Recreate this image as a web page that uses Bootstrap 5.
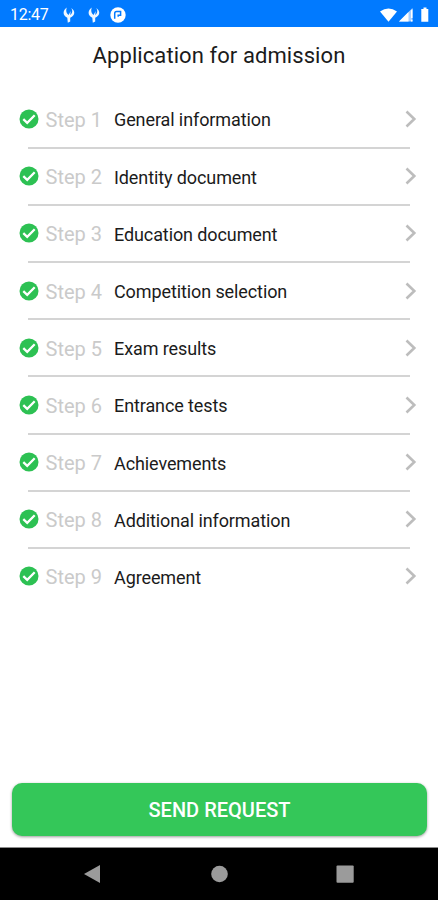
<!DOCTYPE html>
<html lang="en">
<head>
<meta charset="utf-8">
<meta name="viewport" content="width=device-width, initial-scale=1">
<title>Application for admission</title>
<link rel="stylesheet" href="https://cdn.jsdelivr.net/npm/bootstrap@5.3.0/dist/css/bootstrap.min.css">
<style>
body{font-family:Roboto,"Liberation Sans",sans-serif;height:900px;overflow:hidden;color:#1b1b1b}
svg{display:block;flex:none}
.status{height:27px;background:#017aff;padding:2px 8px 0 10px}
.clock{font-size:16px;line-height:24px;width:53px;letter-spacing:-.3px}
.status-app{margin-left:13px}
.status-round{margin-left:10px}
.page-title{font-size:22px;line-height:28px;margin:15px 0 0;font-weight:400;letter-spacing:.08px}
.steps{margin:20.400px 0 0}
.step{height:57.2px;padding:0 21px 0 18.500px;color:#1b1b1b}
.step-line{position:relative}
.step-line:not(:last-child)::after{content:"";position:absolute;left:28px;right:28px;bottom:-1px;height:2px;background:#d4d4d4}
.step-no{font-size:20px;width:68.500px;margin-left:7px;color:#cacaca;padding-top:2px}
.step-name{font-size:18px;padding-top:2px;letter-spacing:-.1px}
.send{height:53px;margin:0 11px 11px 12px;border-radius:10px;background:#34c759!important;color:#fff!important;font-size:20px;font-weight:500;border:0;box-shadow:0 1px 3px rgba(0,0,0,.4);padding-top:7px}
.sysbar{height:53px;background:#000;border-top:1px solid #8c8c8c}
</style>
<script src="https://cdn.jsdelivr.net/npm/bootstrap@5.3.0/dist/js/bootstrap.bundle.min.js"></script>
</head>
<body class="d-flex flex-column bg-white m-0">
<svg width="0" height="0" class="position-absolute" aria-hidden="true">
  <symbol id="check" viewBox="0 0 20 20"><circle cx="10" cy="10" r="9.500" fill="#2dc153"/><path d="M4.300 10.200l3.900 3.700 7.500-7.700" fill="none" stroke="#fff" stroke-width="2.300"/></symbol>
  <symbol id="chev" viewBox="0 0 12 18"><path d="M1.500 1.500L9.300 9l-7.800 7.500" fill="none" stroke="#bdbdbd" stroke-width="2.600"/></symbol>
  <symbol id="fork" viewBox="0 0 12 16"><path d="M3.800.6C-.6 3.800-.5 8.500 4.300 10.700L4.800 15.700 7.200 14.600V10.800C12.300 8.500 12.500 4 8.300.9 9.900 4 9.500 6.300 7.200 8L7.700 4 5.600 7.900C3.200 6.300 2.700 3.500 3.800.6z" fill="#f0f7ff"/></symbol>
</svg>
<header class="status d-flex align-items-center text-white">
  <span class="clock">12:47</span>
  <svg width="12" height="16"><use href="#fork"/></svg>
  <svg class="status-app" width="12" height="16"><use href="#fork"/></svg>
  <svg class="status-round" width="16" height="16" viewBox="0 0 16 16"><circle cx="8" cy="8" r="7.700" fill="#fff"/><path d="M4.700 11.800V6.500Q4.700 4.600 6.600 4.600H10.600V8.200H8.200V9.800" fill="none" stroke="#017aff" stroke-width="1.500"/></svg>
  <svg class="ms-auto" width="50" height="16" viewBox="0 0 50 16"><path d="M0 4.600Q8.500-1.500 17 4.600L8.500 14.700z" fill="#fff"/><path d="M32.500 1v13.500H19z" fill="#a9d0ff"/><path d="M28.500 5v9.500H19zM31 3.500l1.500-1.500v9H31zM31 12.800h1.500v1.700H31z" fill="#fff"/><path d="M43.500.5h3V2h1.800v12.700h-7V2h2.200z" fill="#fff"/></svg>
</header>
<h1 class="page-title text-center">Application for admission</h1>
<main class="steps flex-grow-1">
  <div class="step-line"><a href="#" class="step d-flex align-items-center text-decoration-none"><svg width="20" height="20"><use href="#check"/></svg><span class="step-no">Step 1</span><span class="step-name">General information</span><svg class="ms-auto" width="12" height="18"><use href="#chev"/></svg></a></div>
  <div class="step-line"><a href="#" class="step d-flex align-items-center text-decoration-none"><svg width="20" height="20"><use href="#check"/></svg><span class="step-no">Step 2</span><span class="step-name">Identity document</span><svg class="ms-auto" width="12" height="18"><use href="#chev"/></svg></a></div>
  <div class="step-line"><a href="#" class="step d-flex align-items-center text-decoration-none"><svg width="20" height="20"><use href="#check"/></svg><span class="step-no">Step 3</span><span class="step-name">Education document</span><svg class="ms-auto" width="12" height="18"><use href="#chev"/></svg></a></div>
  <div class="step-line"><a href="#" class="step d-flex align-items-center text-decoration-none"><svg width="20" height="20"><use href="#check"/></svg><span class="step-no">Step 4</span><span class="step-name">Competition selection</span><svg class="ms-auto" width="12" height="18"><use href="#chev"/></svg></a></div>
  <div class="step-line"><a href="#" class="step d-flex align-items-center text-decoration-none"><svg width="20" height="20"><use href="#check"/></svg><span class="step-no">Step 5</span><span class="step-name">Exam results</span><svg class="ms-auto" width="12" height="18"><use href="#chev"/></svg></a></div>
  <div class="step-line"><a href="#" class="step d-flex align-items-center text-decoration-none"><svg width="20" height="20"><use href="#check"/></svg><span class="step-no">Step 6</span><span class="step-name">Entrance tests</span><svg class="ms-auto" width="12" height="18"><use href="#chev"/></svg></a></div>
  <div class="step-line"><a href="#" class="step d-flex align-items-center text-decoration-none"><svg width="20" height="20"><use href="#check"/></svg><span class="step-no">Step 7</span><span class="step-name">Achievements</span><svg class="ms-auto" width="12" height="18"><use href="#chev"/></svg></a></div>
  <div class="step-line"><a href="#" class="step d-flex align-items-center text-decoration-none"><svg width="20" height="20"><use href="#check"/></svg><span class="step-no">Step 8</span><span class="step-name">Additional information</span><svg class="ms-auto" width="12" height="18"><use href="#chev"/></svg></a></div>
  <div class="step-line"><a href="#" class="step d-flex align-items-center text-decoration-none"><svg width="20" height="20"><use href="#check"/></svg><span class="step-no">Step 9</span><span class="step-name">Agreement</span><svg class="ms-auto" width="12" height="18"><use href="#chev"/></svg></a></div>
</main>
<button class="btn send" type="button">SEND REQUEST</button>
<footer class="sysbar">
  <svg width="438" height="52" viewBox="0 0 438 52" fill="#9b9b9b"><path d="M84 26L100 17v18z"/><circle cx="219.500" cy="26" r="8.300"/><rect x="336.500" y="17.500" width="17.200" height="17.200" rx="1"/></svg>
</footer>
</body>
</html>
